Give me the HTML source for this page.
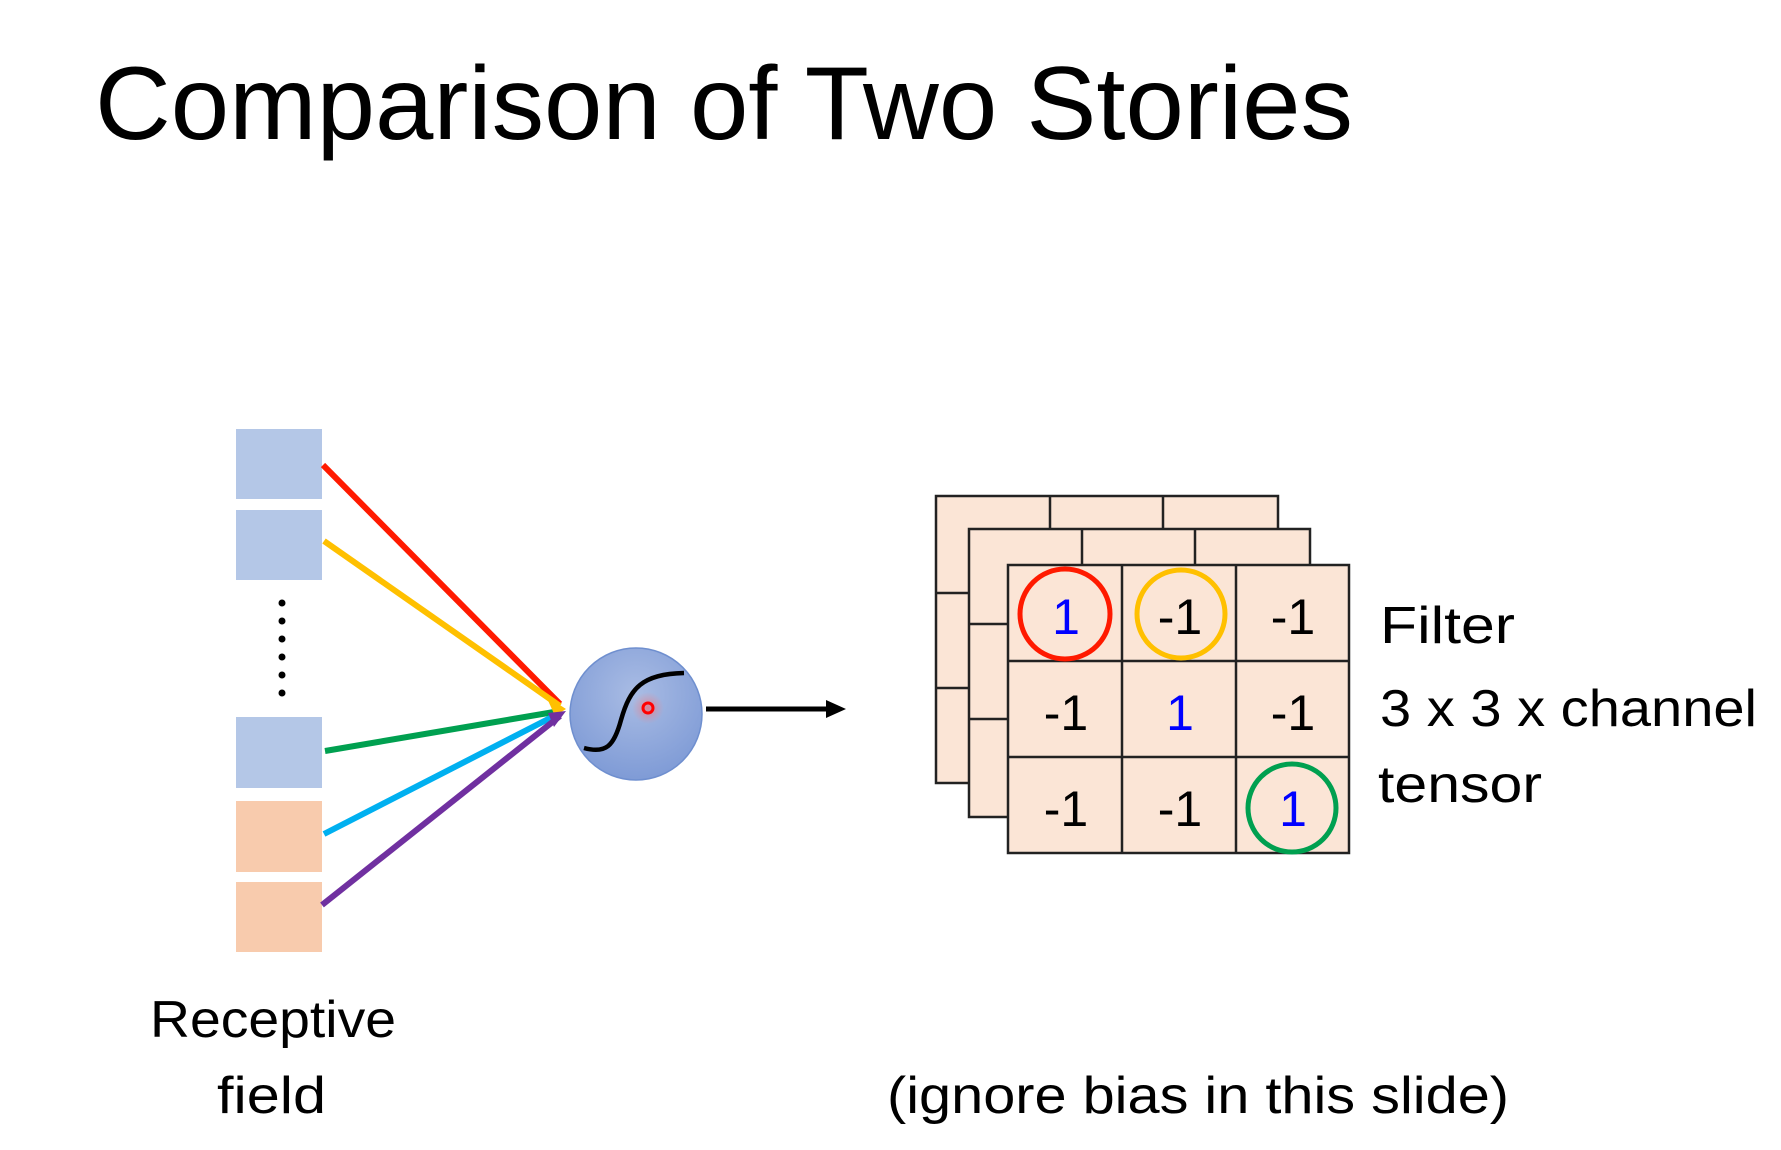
<!DOCTYPE html>
<html><head><meta charset="utf-8"><style>
html,body{margin:0;padding:0;background:#fff;}
svg{display:block;}
text{font-family:"Liberation Sans",sans-serif;fill:#000;}
</style></head><body>
<svg width="1781" height="1150" viewBox="0 0 1781 1150" xmlns="http://www.w3.org/2000/svg">
<defs>
<radialGradient id="ng" cx="50%" cy="35%" r="65%"><stop offset="0" stop-color="#a9bce4"/><stop offset="1" stop-color="#7f9bd6"/></radialGradient>
<radialGradient id="glow"><stop offset="0" stop-color="#ff6060" stop-opacity=".6"/><stop offset="1" stop-color="#ff8080" stop-opacity="0"/></radialGradient>
</defs>
<text x="95" y="139" font-size="104" textLength="1258" lengthAdjust="spacingAndGlyphs">Comparison of Two Stories</text>

<g fill="#b4c7e7">
<rect x="236" y="429" width="86" height="70"/>
<rect x="236" y="510" width="86" height="70"/>
<rect x="236" y="717" width="86" height="71"/>
</g>
<g fill="#f8cbad">
<rect x="236" y="801" width="86" height="71"/>
<rect x="236" y="882" width="86" height="70"/>
</g>
<g fill="#000">
<circle cx="282" cy="603" r="3.5"/><circle cx="282" cy="621" r="3.5"/><circle cx="282" cy="639" r="3.5"/>
<circle cx="282" cy="657" r="3.5"/><circle cx="282" cy="675" r="3.5"/><circle cx="282" cy="693" r="3.5"/>
</g>
<g stroke-width="6" fill="none" stroke-linecap="butt">
<line x1="323" y1="465" x2="560" y2="704" stroke="#ff1a00"/>
<line x1="324" y1="541" x2="560" y2="706" stroke="#ffc000"/>
<line x1="325" y1="751" x2="560" y2="711" stroke="#00a050"/>
<line x1="324" y1="834" x2="560" y2="713" stroke="#00b0f0"/>
<line x1="322" y1="905" x2="560" y2="716" stroke="#7030a0"/>
</g>
<polygon points="566,709 546,696 555,716" fill="#ffc000"/>
<polygon points="566,711 548,713 554,727" fill="#7030a0"/>
<circle cx="636" cy="714" r="66" fill="url(#ng)" stroke="#6f8fcf" stroke-width="1.5"/>
<circle cx="648" cy="708" r="16" fill="url(#glow)"/>
<circle cx="648" cy="708" r="5" fill="none" stroke="#ff0000" stroke-width="3"/>
<path d="M584,748 C606,754 614,746 621,720 C630,688 642,674 684,673" fill="none" stroke="#000" stroke-width="4.5"/>
<line x1="706" y1="709" x2="830" y2="709" stroke="#000" stroke-width="5"/>
<polygon points="846,709 826,700 826,718" fill="#000"/>

<g stroke="#222" stroke-width="2.5" fill="#fbe5d6">
<rect x="936" y="496" width="342" height="287"/>
<line x1="1050" y1="496" x2="1050" y2="529"/><line x1="1163" y1="496" x2="1163" y2="529"/>
<line x1="936" y1="593" x2="969" y2="593"/><line x1="936" y1="688" x2="969" y2="688"/>
<rect x="969" y="529" width="341" height="288"/>
<line x1="1082" y1="529" x2="1082" y2="565"/><line x1="1195" y1="529" x2="1195" y2="565"/>
<line x1="969" y1="624" x2="1008" y2="624"/><line x1="969" y1="719" x2="1008" y2="719"/>
<rect x="1008" y="565" width="341" height="288"/>
<line x1="1122" y1="565" x2="1122" y2="853"/><line x1="1236" y1="565" x2="1236" y2="853"/>
<line x1="1008" y1="661" x2="1349" y2="661"/><line x1="1008" y1="757" x2="1349" y2="757"/>
</g>
<g font-size="50" text-anchor="middle">
<text x="1066" y="634" style="fill:#0000ff">1</text>
<text x="1180" y="634">-1</text>
<text x="1293" y="634">-1</text>
<text x="1066" y="730">-1</text>
<text x="1180" y="730" style="fill:#0000ff">1</text>
<text x="1293" y="730">-1</text>
<text x="1066" y="826">-1</text>
<text x="1180" y="826">-1</text>
<text x="1293" y="826" style="fill:#0000ff">1</text>
</g>
<g fill="none" stroke-width="5">
<circle cx="1065" cy="614" r="45" stroke="#ff1a00"/>
<circle cx="1181" cy="614" r="44" stroke="#ffc000"/>
<circle cx="1292" cy="808" r="44" stroke="#00a050"/>
</g>

<g font-size="52">
<text x="1380" y="643" textLength="135" lengthAdjust="spacingAndGlyphs">Filter</text>
<text x="1380" y="726" textLength="377" lengthAdjust="spacingAndGlyphs">3 x 3 x channel</text>
<text x="1378" y="802" textLength="164" lengthAdjust="spacingAndGlyphs">tensor</text>
<text x="150" y="1037" textLength="246" lengthAdjust="spacingAndGlyphs">Receptive</text>
<text x="217" y="1113" textLength="109" lengthAdjust="spacingAndGlyphs">field</text>
<text x="887" y="1113" textLength="622" lengthAdjust="spacingAndGlyphs">(ignore bias in this slide)</text>
</g>
</svg>
</body></html>
